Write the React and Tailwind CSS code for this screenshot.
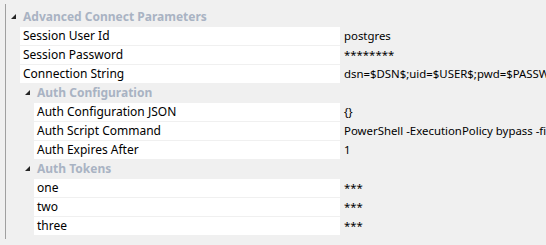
import React from "react";

const Tri = () => (
  <svg width="5" height="5" viewBox="0 0 5 5" className="block">
    <polygon points="5,0 5,5 0,5" fill="#262626" />
  </svg>
);

const Header = ({ label, indent }) => (
  <div className={`flex items-center h-[18px] mb-[1px] ${indent ? "pl-[19px]" : "pl-[5px]"}`}>
    <div className="w-[5px] h-[5px] mt-[-1px]">
      <Tri />
    </div>
    <span className="ml-[7px] font-bold text-[#a9b3c3] leading-[18px] whitespace-nowrap">{label}</span>
  </div>
);

const Row = ({ label, value, indent }) => (
  <div className={`flex h-[18px] mb-[1px] ${indent ? "ml-[28px]" : "ml-[14px]"}`}>
    <div className={`bg-white pl-[3px] leading-[18px] whitespace-nowrap overflow-hidden ${indent ? "w-[306px]" : "w-[320px]"} shrink-0`}>
      {label}
    </div>
    <div className="pl-[4px] leading-[18px] whitespace-nowrap text-[11.4px]">{value}</div>
  </div>
);

export default function App() {
  return (
    <div
      className="w-[546px] h-[245px] bg-[#f0f0f0] overflow-hidden text-[12px] text-black"
      style={{ fontFamily: '"Noto Sans", "Open Sans", sans-serif' }}
    >
      <div className="ml-[5px] mt-[4px] h-[235px] border-l border-[#a0a0a0] pt-[4px]">
        <Header label="Advanced Connect Parameters" />
        <Row label="Session User Id" value="postgres" />
        <Row label="Session Password" value="********" />
        <Row label="Connection String" value="dsn=$DSN$;uid=$USER$;pwd=$PASSWORD$" />
        <Header label="Auth Configuration" indent />
        <Row indent label="Auth Configuration JSON" value="{}" />
        <Row indent label="Auth Script Command" value="PowerShell -ExecutionPolicy bypass -file auth.ps1" />
        <Row indent label="Auth Expires After" value="1" />
        <Header label="Auth Tokens" indent />
        <Row indent label="one" value="***" />
        <Row indent label="two" value="***" />
        <Row indent label="three" value="***" />
      </div>
    </div>
  );
}
